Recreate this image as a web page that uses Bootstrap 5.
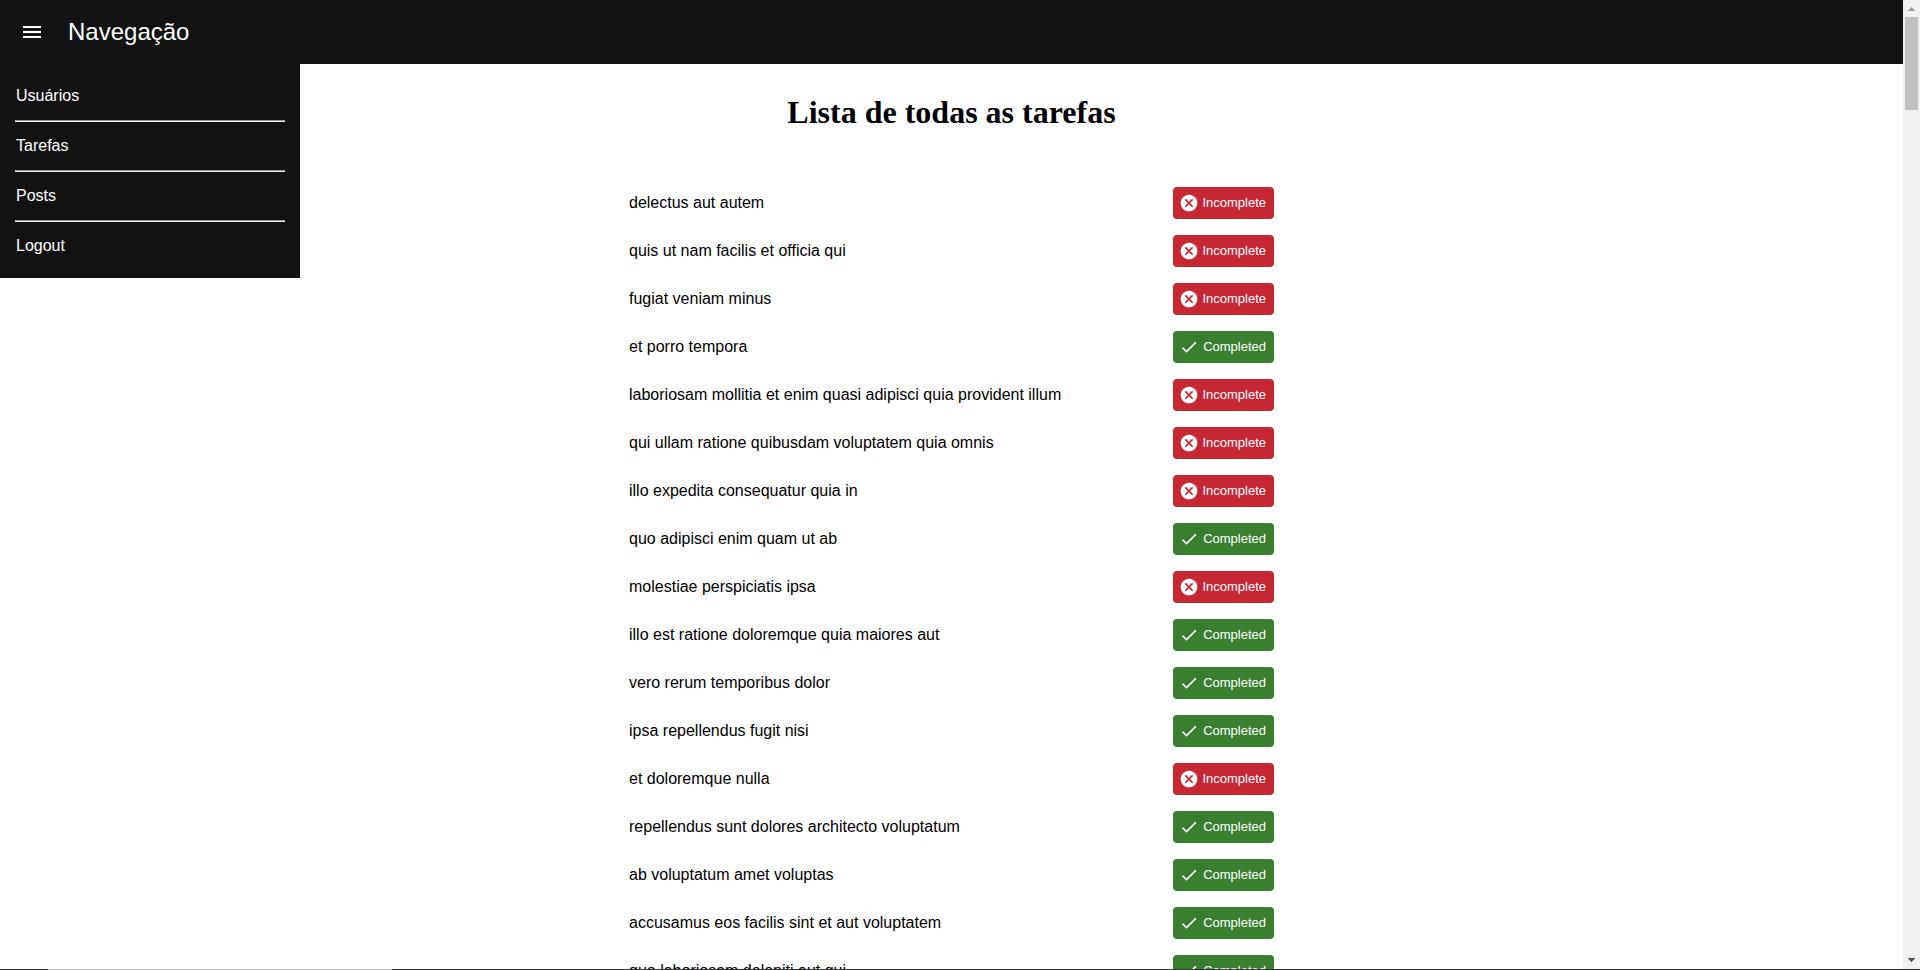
<!DOCTYPE html>
<html lang="pt-BR">
<head>
<meta charset="utf-8">
<meta name="viewport" content="width=device-width, initial-scale=1">
<title>Lista de todas as tarefas</title>
<link href="https://cdn.jsdelivr.net/npm/bootstrap@5.3.0/dist/css/bootstrap.min.css" rel="stylesheet">
<style>
  body { font-family: "Liberation Sans", Arial, sans-serif; font-size: 16px; line-height: 24px; color: #000; }
  .topbar { background: #121212; min-height: 64px; padding: 0 20px; }
  .topbar .menu-btn { width: 24px; height: 24px; }
  .topbar .brand { font-size: 24px; line-height: 32px; }
  .drawer { top: 64px; left: 0; width: 300px; background: #121212; padding: 8px 15px; z-index: 2; }
  .drawer a { display: block; padding: 12px 1px; color: #fff; text-decoration: none; }
  .drawer li + li { border-top: 1px solid #9a9a9a; box-shadow: inset 0 1px #eee; padding-top: 1px; }
  .page-title { font: bold 32px/36px "Liberation Serif", "Times New Roman", serif; padding: 30px 0 57px; }
  .task-list { max-width: 645px; }
  .chip { height: 32px; width: 101px; padding: 0 8px 0 6px; border-radius: 4px; font-size: 13px; line-height: 32px; color: #fff; }
  .chip.incomplete { background: #c62833; }
  .chip.completed { background: #3a7f2f; }
  .scroll-track { width: 17px; background: #f0f0f0; }
  .scroll-track svg { display: block; }
  .scroll-thumb { width: 13px; height: 93px; background: #c1c1c1; }
  .bottom-edge { height: 1px; background: #333; }
  .bottom-edge div { width: 344px; margin-left: 48px; background: #c1c1c1; }
</style>
</head>
<body class="vh-100 overflow-hidden d-flex flex-column">
<svg class="d-none" aria-hidden="true">
  <symbol id="i-cancel" viewBox="0 0 24 24"><path fill="currentColor" d="M12 2C6.47 2 2 6.47 2 12s4.47 10 10 10 10-4.47 10-10S17.53 2 12 2zm5 13.59L15.59 17 12 13.41 8.41 17 7 15.59 10.59 12 7 8.41 8.41 7 12 10.59 15.59 7 17 8.41 13.41 12 17 15.59z"/></symbol>
  <symbol id="i-done" viewBox="0 0 24 24"><path fill="currentColor" d="M9 16.2 4.8 12l-1.4 1.4L9 19 21 7l-1.4-1.4L9 16.2z"/></symbol>
</svg>
<div class="d-flex flex-grow-1 overflow-hidden">
  <div class="flex-grow-1 position-relative overflow-hidden">
    <header class="topbar d-flex align-items-center text-white">
      <button type="button" class="menu-btn btn p-0 border-0 text-white d-flex me-4" aria-label="Menu">
        <svg width="24" height="24" viewBox="0 0 24 24" fill="currentColor"><path d="M3 18h18v-2H3v2zm0-5h18v-2H3v2zm0-7v2h18V6H3z"/></svg>
      </button>
      <span class="brand">Navegação</span>
    </header>
    <nav class="drawer position-absolute" aria-label="Navegação">
      <ul class="list-unstyled m-0">
        <li><a href="#">Usuários</a></li>
        <li><a href="#">Tarefas</a></li>
        <li><a href="#">Posts</a></li>
        <li><a href="#">Logout</a></li>
      </ul>
    </nav>
    <main>
      <h1 class="page-title text-center m-0">Lista de todas as tarefas</h1>
      <ul class="task-list list-unstyled mx-auto mb-0 d-flex flex-column gap-3" id="tasks"></ul>
    </main>
  </div>
  <div class="scroll-track d-flex flex-column align-items-center" aria-hidden="true">
    <svg width="17" height="17" viewBox="0 0 17 17" shape-rendering="crispEdges"><path fill="#a0a0a0" d="M8 7h1v1h1v1h1v1h1v1H5v-1h1V9h1V8h1z"/></svg>
    <div class="scroll-thumb"></div>
    <svg class="mt-auto" width="17" height="17" viewBox="0 0 17 17" shape-rendering="crispEdges"><path fill="#505050" d="M5 6h7v1h-1v1h-1v1H9v1H8V9H7V8H6V7H5z"/></svg>
  </div>
</div>
<div class="bottom-edge d-flex" aria-hidden="true"><div></div></div>
<script>
  const tasks = [
    ["delectus aut autem", 0],
    ["quis ut nam facilis et officia qui", 0],
    ["fugiat veniam minus", 0],
    ["et porro tempora", 1],
    ["laboriosam mollitia et enim quasi adipisci quia provident illum", 0],
    ["qui ullam ratione quibusdam voluptatem quia omnis", 0],
    ["illo expedita consequatur quia in", 0],
    ["quo adipisci enim quam ut ab", 1],
    ["molestiae perspiciatis ipsa", 0],
    ["illo est ratione doloremque quia maiores aut", 1],
    ["vero rerum temporibus dolor", 1],
    ["ipsa repellendus fugit nisi", 1],
    ["et doloremque nulla", 0],
    ["repellendus sunt dolores architecto voluptatum", 1],
    ["ab voluptatum amet voluptas", 1],
    ["accusamus eos facilis sint et aut voluptatem", 1],
    ["quo laboriosam deleniti aut qui", 1]
  ];
  document.getElementById("tasks").innerHTML = tasks.map(([title, done]) => `
    <li class="d-flex justify-content-between align-items-center">
      <span>${title}</span>
      <span class="chip ${done ? "completed" : "incomplete"} d-flex align-items-center justify-content-between">
        <svg width="20" height="20"><use href="#${done ? "i-done" : "i-cancel"}"/></svg>${done ? "Completed" : "Incomplete"}
      </span>
    </li>`).join("");
</script>
<script src="https://cdn.jsdelivr.net/npm/bootstrap@5.3.0/dist/js/bootstrap.bundle.min.js"></script>
</body>
</html>
